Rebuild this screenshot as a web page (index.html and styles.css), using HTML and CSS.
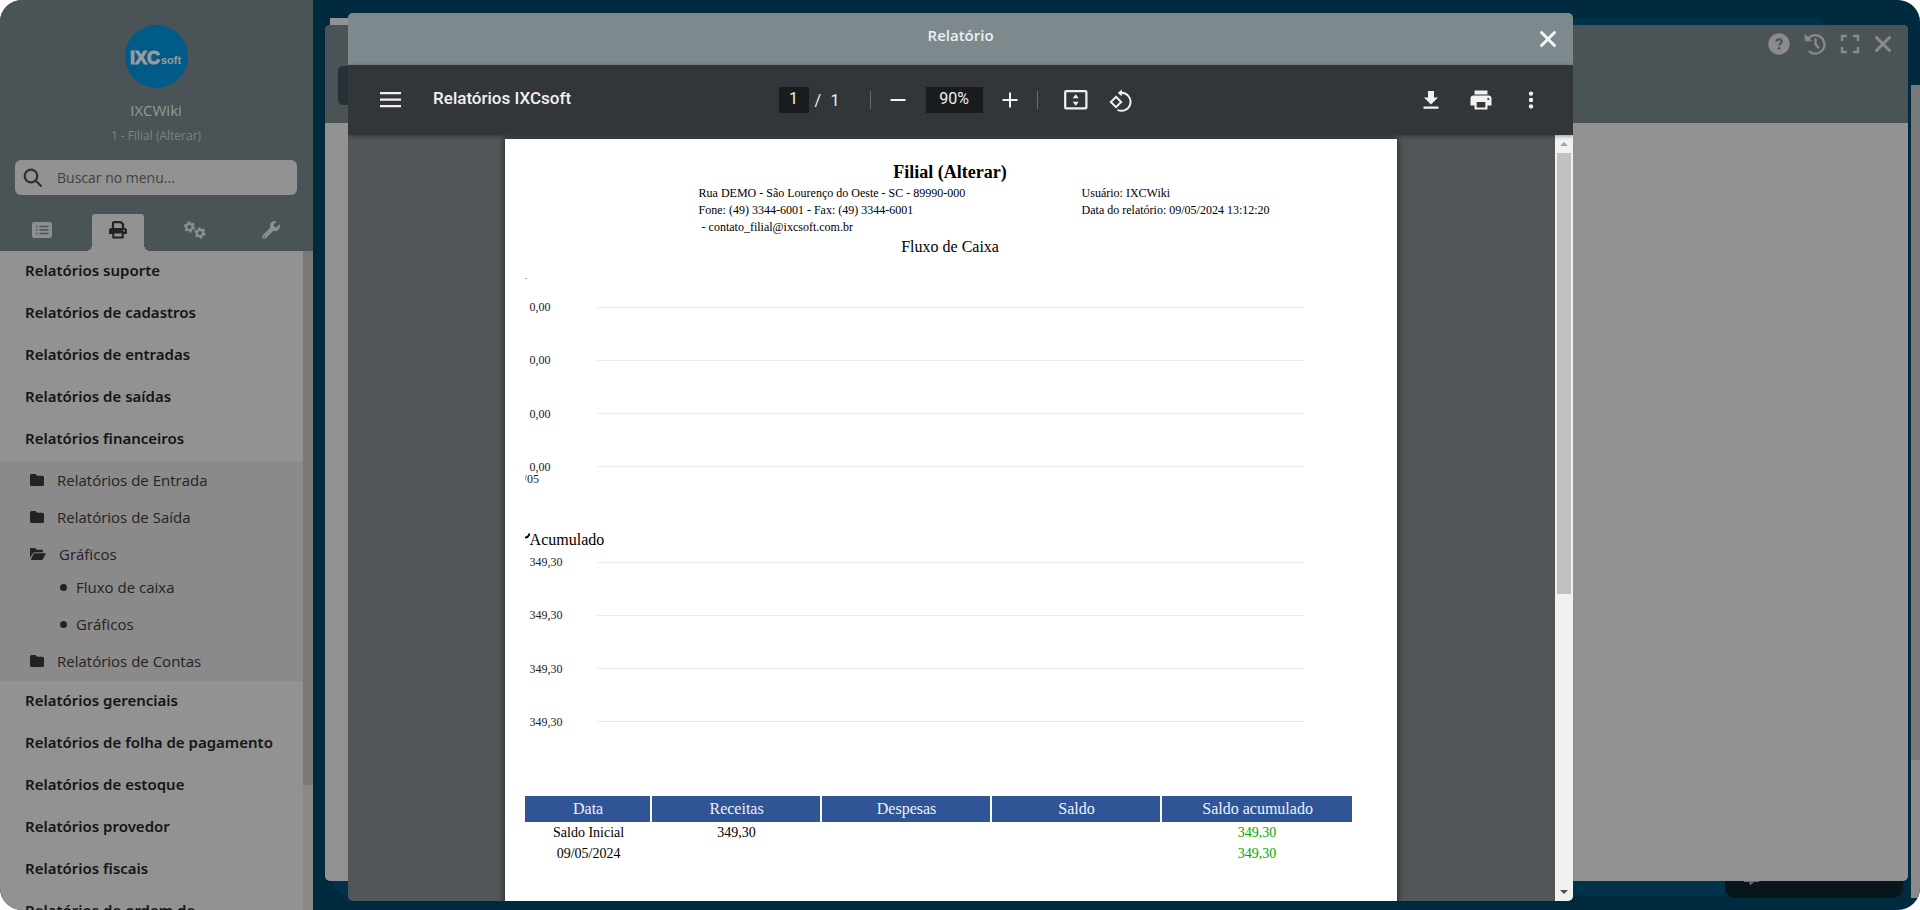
FILE: index.html
```html
<!DOCTYPE html>
<html lang="pt-BR">
<head>
<meta charset="utf-8">
<title>IXCWiki - Relatório</title>
<link rel="stylesheet" href="styles.css">
</head>
<body>
<div class="app">
  <aside class="sidebar">
    <header class="profile">
      <svg class="logo" viewBox="0 0 63 63" role="img" aria-label="IXCsoft">
        <circle cx="31.5" cy="31.5" r="31.5" fill="#005b89"/>
        <text class="logo-main" x="5" y="39">IXC</text>
        <text class="logo-sub" x="36" y="39">soft</text>
      </svg>
      <div class="user">IXCWiki</div>
      <a class="branch" href="#">1 - Filial (Alterar)</a>
      <label class="search">
        <svg viewBox="0 0 20 20" width="20" height="20" fill="none" stroke="#2f2f2f" stroke-width="2.2" stroke-linecap="round"><circle cx="8" cy="8" r="6.3"/><path d="M12.8 12.8 18 18"/></svg>
        <input type="text" placeholder="Buscar no menu..." aria-label="Buscar no menu">
      </label>
      <nav class="tabs">
        <button class="tab" aria-label="Lista"><svg viewBox="0 0 20 16" width="20" height="16"><rect width="20" height="16" rx="2" fill="#8b8f90"/><path d="M4 4.5h1.5M4 8h1.5M4 11.500h1.500M7.500 4.500h9M7.500 8h9M7.500 11.500h9" stroke="#4a5355" stroke-width="1.600"/></svg></button>
        <button class="tab active" aria-label="Relatórios"><svg viewBox="0 0 18 18" width="18" height="18"><path d="M4 7V2.500Q4 1.200 5.300 1.200h6.400l2.300 2V7" fill="none" stroke="#232323" stroke-width="2.200"/><path d="M2.500 7h13A2.500 2.500 0 0 1 18 9.500V13H14.800v3.600a1 1 0 0 1-1 1H4.200a1 1 0 0 1-1-1V13H0V9.500A2.500 2.500 0 0 1 2.500 7Z" fill="#232323"/><path d="M5.300 12.500h7.400v3H5.300z" fill="#929292"/><circle cx="15" cy="9.700" r=".9" fill="#929292"/></svg></button>
        <button class="tab" aria-label="Configurações"><svg viewBox="0 0 22 18" width="22" height="18" fill="none" stroke="#8b8f90"><circle cx="5.500" cy="6" r="3.200" stroke-width="2.400"/><circle cx="5.500" cy="6" r="4.800" stroke-width="1.800" stroke-dasharray="2.500 2.500"/><circle cx="16" cy="12" r="3.200" stroke-width="2.400"/><circle cx="16" cy="12" r="4.800" stroke-width="1.800" stroke-dasharray="2.500 2.500"/></svg></button>
        <button class="tab" aria-label="Ferramentas"><svg viewBox="0 0 512 512" width="18" height="18" fill="#8b8f90"><path d="M507.700 109.100c-2.200-9-13.500-12.100-20.100-5.500l-74.400 74.400-67.900-11.300-11.300-67.900 74.400-74.400c6.600-6.600 3.400-17.900-5.700-20.200-47.400-11.700-99.600.9-136.600 37.900-39.600 39.600-50.600 97.100-34.100 147.200L18.700 402.800c-25 25-25 65.500 0 90.500s65.500 25 90.500 0l213.200-213.200c50.100 16.700 107.500 5.700 147.400-34.200 37.100-37.100 49.700-89.300 37.900-136.800zM64 472a24 24 0 1 1 0-48 24 24 0 0 1 0 48z"/></svg></button>
      </nav>
    </header>
    <div class="menu-area">
      <ul class="menu">
        <li><a href="#">Relatórios suporte</a></li>
        <li><a href="#">Relatórios de cadastros</a></li>
        <li><a href="#">Relatórios de entradas</a></li>
        <li><a href="#">Relatórios de saídas</a></li>
        <li><a href="#">Relatórios financeiros</a>
          <ul class="submenu">
            <li><a href="#"><svg class="folder" viewBox="0 0 14 12"><path d="M1.500 0h4L7 1.700h5.500A1.500 1.500 0 0 1 14 3.200v7.300a1.500 1.500 0 0 1-1.500 1.500h-11A1.500 1.500 0 0 1 0 10.500v-9A1.500 1.500 0 0 1 1.500 0Z"/></svg>Relatórios de Entrada</a></li>
            <li><a href="#"><svg class="folder" viewBox="0 0 14 12"><path d="M1.500 0h4L7 1.700h5.500A1.500 1.500 0 0 1 14 3.200v7.300a1.500 1.500 0 0 1-1.500 1.500h-11A1.500 1.500 0 0 1 0 10.500v-9A1.500 1.500 0 0 1 1.500 0Z"/></svg>Relatórios de Saída</a></li>
            <li><a class="open" href="#"><svg class="folder wide" viewBox="0 0 16 12"><path d="M1.200 0h4l1.500 1.700h5A1.200 1.200 0 0 1 13 3v1.200H5a2.500 2.500 0 0 0-2.200 1.200L0 10V1.200A1.200 1.200 0 0 1 1.200 0Z"/><path d="M4.800 5.200H16l-3 5.800a1.800 1.800 0 0 1-1.600 1H.8l2.600-5.900a1.600 1.600 0 0 1 1.400-.9Z"/></svg>Gráficos</a>
              <ul class="leaves">
                <li><a href="#">Fluxo de caixa</a></li>
                <li><a href="#">Gráficos</a></li>
              </ul>
            </li>
            <li><a href="#"><svg class="folder" viewBox="0 0 14 12"><path d="M1.500 0h4L7 1.700h5.500A1.500 1.500 0 0 1 14 3.200v7.300a1.500 1.500 0 0 1-1.500 1.500h-11A1.500 1.500 0 0 1 0 10.500v-9A1.500 1.500 0 0 1 1.500 0Z"/></svg>Relatórios de Contas</a></li>
          </ul>
        </li>
        <li><a href="#">Relatórios gerenciais</a></li>
        <li><a href="#">Relatórios de folha de pagamento</a></li>
        <li><a href="#">Relatórios de estoque</a></li>
        <li><a href="#">Relatórios provedor</a></li>
        <li><a href="#">Relatórios fiscais</a></li>
        <li><a href="#">Relatórios de ordem de</a></li>
      </ul>
      <div class="menu-scroll"><div class="menu-thumb"></div></div>
    </div>
  </aside>

  <main class="desktop">
    <div class="panel"></div>
    <div class="panel-tab"></div>
    <div class="chat"><svg viewBox="0 0 16 5" width="16" height="5"><path d="M0 0h15v1h-5L6 4.500 5 1H0z" fill="#5d7176"/></svg></div>
    <div class="page-scroll"><div class="page-thumb"></div></div>
    <section class="window">
      <header class="window-head">
        <span class="window-button"></span>
        <div class="window-tools">
          <button aria-label="Ajuda"><svg viewBox="0 0 22 22" width="22" height="22"><circle cx="11" cy="11" r="10.700" fill="#8b8b8b"/><path d="M8.300 8.600c.3-3 5.400-3 5.400 0 0 1.900-2.600 1.900-2.600 4" fill="none" stroke="#4a5355" stroke-width="2.100"/><circle cx="11" cy="15.300" r="1.300" fill="#4a5355"/></svg></button>
          <button aria-label="Histórico"><svg viewBox="0 0 22 22" width="22" height="22" fill="none" stroke="#8b8b8b" stroke-width="2.300" stroke-linecap="round"><path d="M4 5.500A9.300 9.300 0 1 1 5.500 18.700"/><path d="M1.200 2v5.800H7z" fill="#8b8b8b" stroke-width="1"/><path d="M11.500 6.500V11l2.800 3.500"/></svg></button>
          <button aria-label="Tela cheia"><svg viewBox="0 0 20 20" width="20" height="20" fill="none" stroke="#8b8b8b" stroke-width="2.400"><path d="M2 7V2h5M13 2h5v5M18 13v5h-5M7 18H2v-5"/></svg></button>
          <button aria-label="Fechar janela"><svg viewBox="0 0 18 18" width="18" height="18" stroke="#8b8b8b" stroke-width="3" stroke-linecap="round"><path d="M2.500 2.500l13 13M15.500 2.500l-13 13"/></svg></button>
        </div>
      </header>
    </section>
  </main>
</div>

<div class="modal" role="dialog" aria-labelledby="modal-title">
  <header class="modal-head">
    <h1 id="modal-title">Relatório</h1>
    <button class="close" aria-label="Fechar"><svg viewBox="0 0 18 18" width="18" height="18" stroke="#f4f4f4" stroke-width="3" stroke-linecap="round"><path d="M2.500 2.500l13 13M15.500 2.500l-13 13"/></svg></button>
  </header>
  <div class="toolbar">
    <div class="tools-start">
      <button class="tool" aria-label="Menu"><svg viewBox="0 0 22 16" width="22" height="16" fill="#f1f1f1"><path d="M0 0h21v2.300H0zM0 6.500h21v2.300H0zM0 13h21v2.300H0z"/></svg></button>
      <h2 class="doc-title">Relatórios IXCsoft</h2>
    </div>
    <div class="tools-mid">
      <input class="field field-page" type="text" value="1" aria-label="Página">
      <span class="slash">/</span><span class="total">1</span>
      <i class="divider"></i>
      <button class="tool zoom-out" aria-label="Diminuir"><svg viewBox="0 0 16 16" width="16" height="16" stroke="#f1f1f1" stroke-width="2"><path d="M.5 8h15"/></svg></button>
      <input class="field field-zoom" type="text" value="90%" aria-label="Zoom">
      <button class="tool zoom-in" aria-label="Aumentar"><svg viewBox="0 0 16 16" width="16" height="16" stroke="#f1f1f1" stroke-width="2"><path d="M.5 8h15M8 .5v15"/></svg></button>
      <i class="divider"></i>
      <button class="tool fit" aria-label="Ajustar à página"><svg viewBox="0 0 24 20" width="24" height="20"><rect x="1.200" y="1.200" width="21.200" height="17.200" rx="1" fill="none" stroke="#f1f1f1" stroke-width="2.200"/><path d="M8.700 8.200h6L11.700 4.200zM8.700 11.700h6L11.700 15.700z" fill="#f1f1f1"/></svg></button>
      <button class="tool rotate" aria-label="Girar"><svg viewBox="0 0 23 23" width="23" height="23" fill="none" stroke="#f1f1f1" stroke-width="2"><path d="M7 7.800l5.200 5.200L7 18.200 1.800 13z"/><path d="M11.500 3.800A9 9 0 1 1 8.500 20.800"/><path d="M12.800.5v6.700L8.800 3.900z" fill="#f1f1f1" stroke="none"/></svg></button>
    </div>
    <div class="tools-end">
      <button class="tool" aria-label="Baixar"><svg viewBox="0 0 16 20" width="16" height="20" fill="#f1f1f1"><path d="M5 1h6v6.500h4L8 14.500 1 7.500h4zM.5 16.500h15v2.300H.5z"/></svg></button>
      <button class="tool" aria-label="Imprimir"><svg viewBox="0 0 22 20" width="22" height="20"><path d="M4.500.5h13v4h-13zM3.500 5.500h15a3 3 0 0 1 3 3v7h-4v4h-13v-4h-4v-7a3 3 0 0 1 3-3Z" fill="#f1f1f1"/><path d="M6.700 12h8.600v5.500H6.700z" fill="#323639"/><circle cx="18.300" cy="9" r="1.100" fill="#323639"/></svg></button>
      <button class="tool" aria-label="Mais ações"><svg viewBox="0 0 6 18" width="6" height="18" fill="#f1f1f1"><circle cx="3" cy="2.600" r="2.200"/><circle cx="3" cy="9" r="2.200"/><circle cx="3" cy="15.400" r="2.200"/></svg></button>
    </div>
  </div>
  <div class="viewer">
    <div class="canvas">
      <article class="sheet">
        <h3 class="company">Filial (Alterar)</h3>
        <div class="info">
          <p>Rua DEMO - São Lourenço do Oeste - SC - 89990-000<br>Fone: (49) 3344-6001 - Fax: (49) 3344-6001<br>&nbsp;- contato_filial@ixcsoft.com.br</p>
          <p>Usuário: IXCWiki<br>Data do relatório: 09/05/2024 13:12:20</p>
        </div>
        <h4 class="report-name">Fluxo de Caixa</h4>
        <svg class="speck" viewBox="0 0 4 2" width="4" height="2"><path d="M0 .5h2" stroke="#a9a3b5"/></svg>
        <div class="chart">
          <div class="tick"><span>0,00</span><i></i></div>
          <div class="tick"><span>0,00</span><i></i></div>
          <div class="tick"><span>0,00</span><i></i></div>
          <div class="tick"><span>0,00</span><i></i></div>
        </div>
        <div class="axis"><span>/05</span></div>
        <h4 class="accum"><svg viewBox="0 0 5 6" width="5" height="6"><path d="M4.500.5Q4 4 0 4.700" fill="none" stroke="#000" stroke-width="1.800"/></svg>Acumulado</h4>
        <div class="chart">
          <div class="tick"><span>349,30</span><i></i></div>
          <div class="tick"><span>349,30</span><i></i></div>
          <div class="tick"><span>349,30</span><i></i></div>
          <div class="tick"><span>349,30</span><i></i></div>
        </div>
        <table class="balance">
          <colgroup><col class="c-date"><col class="c-value"><col class="c-value"><col class="c-value"><col></colgroup>
          <thead><tr><th>Data</th><th>Receitas</th><th>Despesas</th><th>Saldo</th><th>Saldo acumulado</th></tr></thead>
          <tbody>
            <tr><td>Saldo Inicial</td><td>349,30</td><td></td><td></td><td class="plus">349,30</td></tr>
            <tr><td>09/05/2024</td><td></td><td></td><td></td><td class="plus">349,30</td></tr>
          </tbody>
        </table>
      </article>
    </div>
    <div class="scrollbar">
      <svg viewBox="0 0 8 4" width="8" height="4"><path d="M0 4h8L4 0z" fill="#a3a3a3"/></svg>
      <div class="track"><div class="thumb"></div></div>
      <svg viewBox="0 0 8 4" width="8" height="4"><path d="M0 0h8L4 4z" fill="#505050"/></svg>
    </div>
  </div>
</div>
</body>
</html>
```
FILE: styles.css
```css
* { box-sizing: border-box; }
body { margin: 0; background: #fff; font-family: "Open Sans", "Noto Sans", sans-serif; font-size: 15px; overflow: hidden; }
h1, h2, h3, h4, p, ul { margin: 0; padding: 0; }
ul { list-style: none; }
a { color: inherit; text-decoration: none; }
button { border: 0; padding: 0; background: none; display: flex; align-items: center; justify-content: center; }
svg { display: block; flex: none; }

.app { display: flex; height: 100vh; background: #002b3e; border-radius: 22px; overflow: hidden; }

/* Sidebar */
.sidebar { width: 313px; flex: none; display: flex; flex-direction: column; background: #929292; }
.profile { display: flex; flex-direction: column; align-items: center; padding: 25px 16px 0 15px; background: #4a5355; }
.logo { width: 63px; height: 63px; }
.logo-main { font: bold 18px "Liberation Sans", sans-serif; fill: #9c9c9c; stroke: #9c9c9c; stroke-width: 1px; }
.logo-sub { font: bold 11px "Liberation Sans", sans-serif; fill: #9c9c9c; }
.user { margin-top: 10px; line-height: 24px; color: #969a9b; }
.branch { margin-top: 4px; font-size: 12px; line-height: 20px; color: #7d8384; }
.search { display: flex; align-items: center; gap: 12px; width: 100%; height: 35px; margin-top: 14px; padding: 0 8px; border-radius: 6px; background: #929292; }
.search input { flex: 1; min-width: 0; border: 0; outline: 0; background: none; font: 14px "Open Sans", sans-serif; color: #333; }
.search input::placeholder { color: #414141; opacity: 1; }
.tabs { display: flex; justify-content: space-between; width: 100%; height: 37px; margin-top: 19px; padding: 0 0 0 1px; }
.tab { width: 52px; height: 31px; }
.tab.active { height: 37px; padding-bottom: 6px; border-radius: 3px 3px 0 0; background: #929292; position: relative; }
.tab.active::before, .tab.active::after { content: ""; position: absolute; bottom: 0; width: 6px; height: 6px; }
.tab.active::before { right: 100%; background: radial-gradient(circle at 0 0, transparent 6px, #929292 6px); }
.tab.active::after { left: 100%; background: radial-gradient(circle at 100% 0, transparent 6px, #929292 6px); }
.menu-area { flex: 1; min-height: 0; display: flex; }
.menu { flex: 1; overflow: hidden; color: #151515; font-family: "Noto Sans", sans-serif; font-weight: 600; line-height: 20px; white-space: nowrap; }
.menu > li > a { display: block; padding: 9px 25px 13px; }
.submenu { margin-top: 1px; border-top: 1px solid #838383; background: #8a8a8a; color: #232323; font-family: "Open Sans", sans-serif; font-weight: 400; }
.submenu a { display: flex; align-items: center; gap: 13px; height: 37px; padding: 0 0 3px 30px; }
.submenu a.open { height: 33px; padding-bottom: 0; font-weight: 500; }
.folder { width: 14px; height: 12px; fill: #232323; }
.folder.wide { width: 16px; }
.submenu .leaves a { gap: 9px; padding-left: 60px; }
.leaves a::before { content: ""; width: 7px; height: 7px; border-radius: 50%; background: #232323; }
.menu-scroll { width: 10px; background: #898989; }
.menu-thumb { height: 81%; background: #797979; }

/* Desktop behind the dialog */
.desktop { flex: 1; position: relative; }
.panel { position: absolute; inset: 18px 90px 15px 18px; border-radius: 18px; background: #00334a; }
.panel-tab { position: absolute; top: 18px; left: 17px; width: 60px; height: 20px; background: #929292; }
.chat { position: absolute; right: 17px; bottom: 12px; width: 178px; height: 34px; padding: 17px 19px; border-radius: 10px; background: #08161b; }
.page-scroll { position: absolute; top: 85px; right: 0; bottom: 12px; width: 9px; background: #8b8b8b; }
.page-thumb { height: 83%; background: #797979; }
.window { position: absolute; inset: 25px 12px 29px 12px; border-radius: 5px; overflow: hidden; background: #929292; }
.window-head { display: flex; justify-content: space-between; height: 98px; padding: 8px 16px 0 13px; background: #4a5355; }
.window-button { width: 100px; height: 39px; margin-top: 33px; border-radius: 5px; background: #292f36; }
.window-tools { display: flex; align-items: center; gap: 14px; height: 22px; }

/* Dialog */
.modal { position: fixed; top: 13px; right: 18.07%; bottom: 9px; left: 18.13%; display: flex; flex-direction: column; border-radius: 5px; overflow: hidden; background: #525659; }
.modal-head { display: grid; grid-template-columns: 1fr auto 1fr; height: 52px; padding: 0 16px; background: #7d898d; }
.modal-head h1 { grid-column: 2; font-size: 15px; font-weight: 600; line-height: 44px; color: #efefef; }
.close { justify-self: end; height: 52px; }
.toolbar { display: flex; align-items: flex-start; height: 70px; padding: 15px 22px 0 23px; background: #323639; box-shadow: 0 1px 4px rgba(0, 0, 0, .4); z-index: 1; color: #f1f1f1; font-family: Roboto, sans-serif; font-size: 16px; }
.tools-start, .tools-end { flex: 1; display: flex; align-items: center; height: 40px; }
.tools-end { justify-content: flex-end; gap: 10px; }
.tools-mid { display: flex; align-items: center; height: 40px; padding-right: 12px; }
.tool { width: 40px; height: 40px; }
.doc-title { margin-left: 22px; padding-bottom: 4px; font-size: 17px; font-weight: 500; }
.field { height: 26px; border: 0; padding: 0 0 3px; background: #191b1c; color: #f1f1f1; text-align: center; font: 16px Roboto, sans-serif; }
.field-page { width: 30px; }
.field-zoom { width: 57px; }
.slash { width: 22px; padding-left: 6px; }
.total { width: 39px; }
.divider { width: 1px; height: 18px; background: #6a6d70; }
.zoom-out { width: 55px; }
.zoom-in { width: 54px; }
.fit { width: 71px; padding-left: 5px; }
.rotate { width: 23px; }
.viewer { flex: 1; min-height: 0; display: flex; }
.canvas { flex: 1; overflow: hidden; padding: 4px 2px 0 0; display: flex; justify-content: center; }
.scrollbar { width: 18px; display: flex; flex-direction: column; align-items: center; gap: 7px; padding: 7px 2px; background: #f1f1f1; }
.track { flex: 1; width: 100%; }
.thumb { height: 60.4%; background: #c1c1c1; }

/* Report page */
.sheet { width: 892px; min-height: 1200px; flex: none; padding: 21px 45px 0 20px; background: #fff; color: #000; box-shadow: 0 0 6px 1px rgba(0, 0, 0, .5); font: 12px/17px "Liberation Serif", serif; }
.company { margin-bottom: 1px; font-size: 18px; line-height: 24px; text-align: center; }
.info { display: grid; grid-template-columns: 383px 1fr; padding-left: 174px; }
.report-name { font-size: 16px; font-weight: 400; line-height: 22px; text-align: center; }
.company, .report-name { padding-left: 24px; }
.speck { margin-top: 20px; margin-bottom: 20px; }
.chart { display: flex; flex-direction: column; justify-content: space-between; height: 174px; padding: 0 48px 0 5px; }
.tick { display: grid; grid-template-columns: 67px 1fr; align-items: center; line-height: 14px; color: #222; }
.tick i { height: 1px; background: #ebebeb; }
.axis { height: 12px; line-height: 10px; overflow: hidden; color: #222; }
.axis span { margin-left: -1px; }
.accum { display: flex; margin: 43px 0 4px; font-size: 16px; font-weight: 400; line-height: 22px; }
.accum svg { margin-top: 4px; }
.balance { width: 100%; margin-top: 67px; table-layout: fixed; border-collapse: collapse; text-align: center; font-size: 14px; line-height: 21px; }
.c-date { width: 126px; }
.c-value { width: 170px; }
.balance th { padding: 0 0 0 2px; font-size: 16px; font-weight: 400; line-height: 26px; color: #eef1f8; background: #2f5597; border-left: 2px solid #fff; }
.balance th:first-child { border-left: 0; }
.balance td { height: 21px; padding: 0 0 0 2px; }
.balance .plus { color: #00a800; }
```
